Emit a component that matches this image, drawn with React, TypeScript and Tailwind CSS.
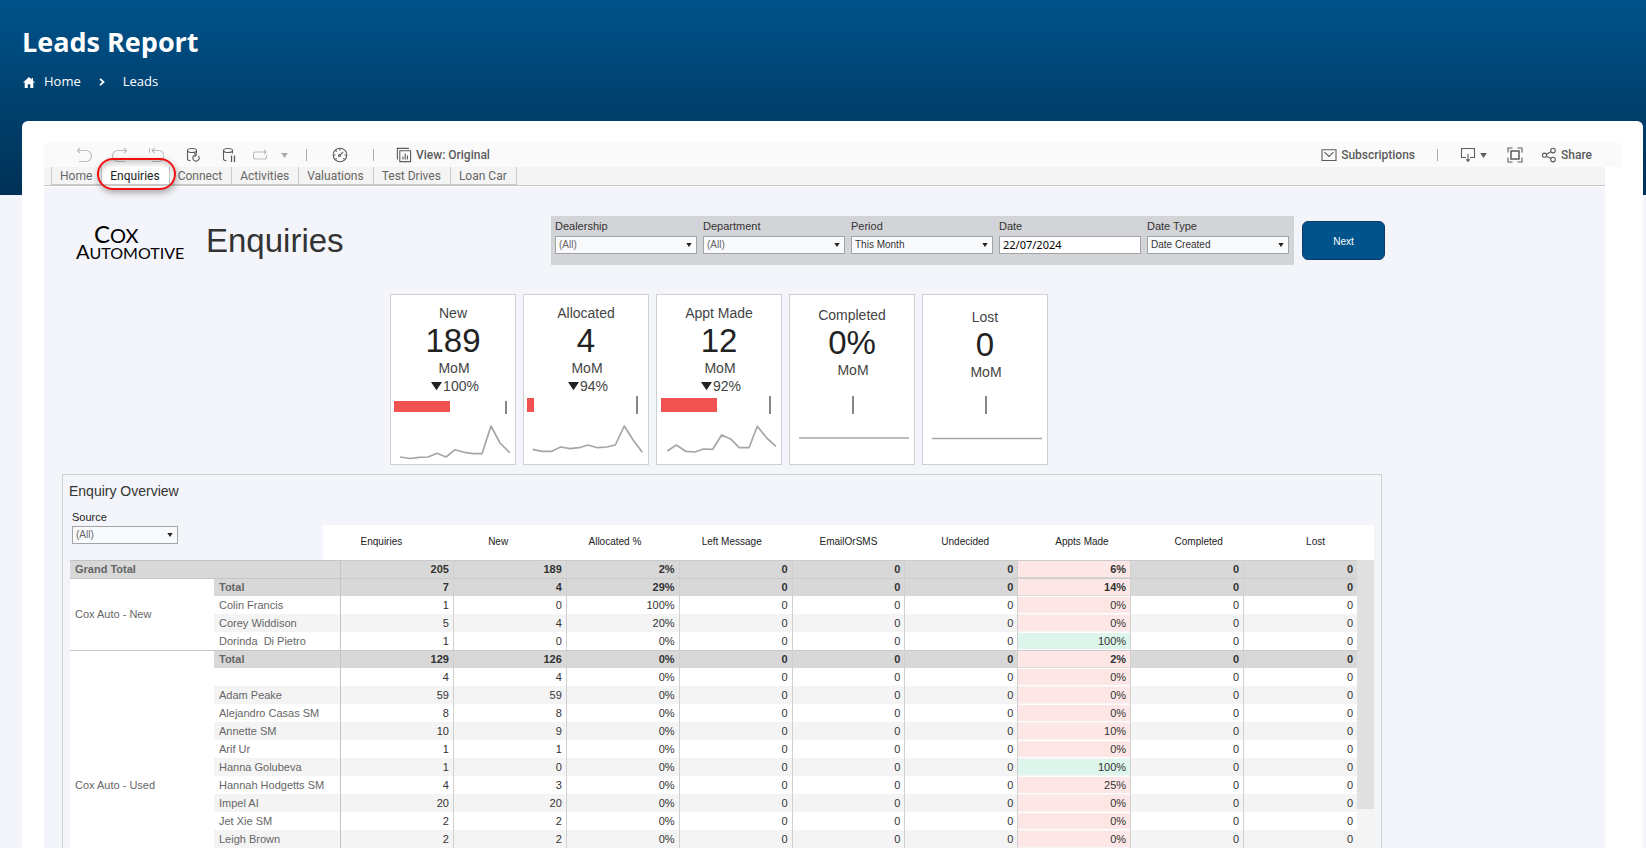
import React from 'react';
import clsx from 'clsx';

type Kpi = {
  label: string;
  value: string;
  change?: string;
  pad: string;
  bar?: { x: number; y: number; w: number; h: number };
  tick: { x: number; y: number; h: number };
  points: string;
};

type Row = { name: string; values: string[]; total?: boolean };

const FILTERS = [
  { id: 'dealership', label: 'Dealership', value: '(All)', muted: true },
  { id: 'department', label: 'Department', value: '(All)', muted: true },
  { id: 'period', label: 'Period', value: 'This Month' },
  { id: 'date', label: 'Date', value: '22/07/2024', text: true },
  { id: 'date-type', label: 'Date Type', value: 'Date Created' },
];

const TABS = ['Home', 'Enquiries', 'Connect', 'Activities', 'Valuations', 'Test Drives', 'Loan Car'];

const KPIS: Kpi[] = [
  {
    label: 'New', value: '189', change: '100%', pad: 'pt-[9px]',
    bar: { x: 3, y: 7, w: 56, h: 11 }, tick: { x: 114, y: 7, h: 13 },
    points: '9,63 19,64.5 28,63.3 37,63 46,59.3 55,63 64,55.7 73,58.3 82,59.7 91,59.7 100,32 109,49 118.7,58.7',
  },
  {
    label: 'Allocated', value: '4', change: '94%', pad: 'pt-[9px]',
    bar: { x: 3, y: 4, w: 7, h: 14 }, tick: { x: 112, y: 2, h: 18 },
    points: '8.7,55.3 18,57.3 27.7,57.3 36.7,53 46,54.7 55,53.7 64,51 73.3,53.7 82.7,53 91.3,51 100.3,32 109.3,46.3 118.3,58.3',
  },
  {
    label: 'Appt Made', value: '12', change: '92%', pad: 'pt-[9px]',
    bar: { x: 4, y: 4, w: 56, h: 14 }, tick: { x: 112, y: 2, h: 18 },
    points: '10.3,57 19.3,51 28.7,57.3 38,58 46.3,55 55.7,55.3 64.7,41 74,45.3 82.3,53.7 92,53.7 100.3,32.3 109.7,44 119,52.3',
  },
  { label: 'Completed', value: '0%', pad: 'pt-[11px]', tick: { x: 62, y: 2, h: 18 }, points: '9,44 119,44' },
  { label: 'Lost', value: '0', pad: 'pt-[13px]', tick: { x: 62, y: 2, h: 18 }, points: '9,44.5 119,44.5' },
];

const COLUMNS = ['Enquiries', 'New', 'Allocated %', 'Left Message', 'EmailOrSMS', 'Undecided', 'Appts Made', 'Completed', 'Lost'];

// enquiries, new, allocated %, appts made; every other measure is zero
const row = (name: string, enq: string, fresh: string, alloc: string, appts: string, total = false): Row => ({
  name,
  total,
  values: [enq, fresh, alloc, '0', '0', '0', appts, '0', '0'],
});

const GRAND_TOTAL = row('Grand Total', '205', '189', '2%', '6%', true);

const GROUPS = [
  {
    name: 'Cox Auto - New',
    rows: [
      row('Total', '7', '4', '29%', '14%', true),
      row('Colin Francis', '1', '0', '100%', '0%'),
      row('Corey Widdison', '5', '4', '20%', '0%'),
      row('Dorinda  Di Pietro', '1', '0', '0%', '100%'),
    ],
  },
  {
    name: 'Cox Auto - Used',
    more: true,
    rows: [
      row('Total', '129', '126', '0%', '2%', true),
      row('', '4', '4', '0%', '0%'),
      row('Adam Peake', '59', '59', '0%', '0%'),
      row('Alejandro Casas SM', '8', '8', '0%', '0%'),
      row('Annette SM', '10', '9', '0%', '10%'),
      row('Arif Ur', '1', '1', '0%', '0%'),
      row('Hanna Golubeva', '1', '0', '0%', '100%'),
      row('Hannah Hodgetts SM', '4', '3', '0%', '25%'),
      row('Impel AI', '20', '20', '0%', '0%'),
      row('Jet Xie SM', '2', '2', '0%', '0%'),
      row('Leigh Brown', '2', '2', '0%', '0%'),
    ],
  },
];

// --- ICONS ---
const Icon = ({ children }: { children: React.ReactNode }) => (
  <svg viewBox="0 0 16 16" className="size-4 shrink-0" fill="none" stroke="currentColor" strokeWidth="1.1" aria-hidden="true">
    {children}
  </svg>
);

const UndoIcon = () => (
  <Icon><path d="M1.5 3.5H10a5 5 0 0 1 0 11H3M4 1 1.5 3.5 4 6" /></Icon>
);

const RedoIcon = () => (
  <Icon><path d="M14.5 3.5H6a5 5 0 0 0 0 11h7M12 1l2.5 2.5L12 6" /></Icon>
);

const RevertIcon = () => (
  <Icon><path d="M1.5 1v5M4 3.5h6.5a5 5 0 0 1 0 11H4M6.5 1 4 3.5 6.5 6" /></Icon>
);

const DbPath = () => (
  <path d="M2.5 3.5c0-1.2 2-2 4.5-2s4.5.8 4.5 2-2 2-4.5 2-4.5-.8-4.5-2ZM2.5 3.5V12c0 .8.8 1.5 3 1.8M11.5 3.5v3" />
);

const RefreshIcon = () => (
  <Icon><g transform="translate(1)"><DbPath /><path d="M13.400 8.800a3.200 3.200 0 1 1-3.400-.9M9.400 6 11.400 7.900l-1.800 2.100" /></g></Icon>
);

const PauseIcon = () => (
  <Icon><g transform="translate(1)"><DbPath /><path d="M10.5 8.500v6.500M13.5 8.500v6.500" strokeWidth="1.3" /></g></Icon>
);

const ReplayIcon = () => (
  <Icon><path d="M10 12H3.500a2 2 0 0 1-2-2V7a2 2 0 0 1 2-2H14M12 3l2.200 2L12 7M10 12h2.500a2 2 0 0 0 2-2V8" /></Icon>
);

const GaugeIcon = () => (
  <Icon>
    <circle cx="8" cy="8" r="6.800" />
    <circle cx="7.500" cy="8.500" r="1" />
    <path d="m8.200 7.800 3-3M8 1.500v2M1.500 8h2M12.500 8h2M3.400 3.400l1.300 1.300M3.400 12.600l1.300-1.300M12.600 12.600l-1.300-1.300" />
  </Icon>
);

const ViewIcon = () => (
  <Icon>
    <path d="M3.800 3.800h10.800v10.800H3.800zM1.400 12.500V1.400h11.500M7 12.500V9.500M9.200 12.500V6.500M11.400 12.500V8.500" />
  </Icon>
);

const MailIcon = () => (
  <Icon><path d="M1 2.700h14v10.800H1zM3.500 5.200 8 9.500l4.500-4.300" /></Icon>
);

const DownloadIcon = () => (
  <Icon>
    <path d="M6 10.500H1.500v-9h13v9H10M8 7v7" />
    <path d="M5.500 12.200h5L8 15.200z" fill="currentColor" stroke="none" />
  </Icon>
);

const FullScreenIcon = () => (
  <Icon>
    <path d="M4 4h8v8H4z" strokeWidth="1.500" />
    <path d="M1 5.500V1h4.500M10.500 1H15v4.500M15 10.500V15h-4.500M5.500 15H1v-4.500" />
  </Icon>
);

const ShareIcon = () => (
  <Icon>
    <circle cx="3.500" cy="8.200" r="2.100" />
    <circle cx="12" cy="3.600" r="2.300" />
    <circle cx="12" cy="12.600" r="2.300" />
    <path d="m5.400 7.300 4.500-2.500M5.400 9.200l4.600 2.300" />
  </Icon>
);

const Caret = ({ className }: { className?: string }) => (
  <svg viewBox="0 0 8 6" className={clsx('shrink-0', className)} fill="currentColor" aria-hidden="true">
    <path d="M0 0h8L4 6z" />
  </svg>
);

const Divider = () => <span className="h-3 w-px bg-[#a9a9a9]" />;

// --- CONTROLS ---
const Dropdown = ({ id, value, muted }: { id: string; value: string; muted?: boolean }) => (
  <div className="relative">
    <select
      id={id}
      defaultValue={value}
      className={clsx(
        'block h-[18px] w-full appearance-none border border-[#a2a4a8] bg-[#f9fafc] pl-[3px] text-[10px] leading-4',
        muted ? 'text-[#666666]' : 'text-[#333333]'
      )}
    >
      <option>{value}</option>
    </select>
    <Caret className="pointer-events-none absolute right-[5px] top-[7px] h-1 w-1.5 text-[#222222]" />
  </div>
);

const Toolbar = () => (
  <div className="flex h-6 items-center bg-[#fafafa] pl-[22px] pr-[30px] font-[Roboto,sans-serif] text-xs font-medium text-[#5c5c5c]">
    <button aria-label="Undo" className="flex w-9 justify-center text-[#bdbdbd]"><UndoIcon /></button>
    <button aria-label="Redo" className="flex w-9 justify-center text-[#bdbdbd]"><RedoIcon /></button>
    <button aria-label="Revert" className="flex w-9 justify-center text-[#bdbdbd]"><RevertIcon /></button>
    <button aria-label="Refresh data" className="flex w-9 justify-center"><RefreshIcon /></button>
    <button aria-label="Pause updates" className="flex w-9 justify-center"><PauseIcon /></button>
    <button aria-label="Replay" className="flex w-7 justify-center text-[#bdbdbd]"><ReplayIcon /></button>
    <button aria-label="Replay speed" className="mr-3 flex w-5 justify-center text-[#aaaaaa]"><Caret className="h-[5px] w-[7px]" /></button>
    <Divider />
    <button aria-label="Metrics" className="flex w-[66px] justify-center"><GaugeIcon /></button>
    <Divider />
    <button className="ml-[22px] flex items-center gap-1"><ViewIcon />View: Original</button>

    <button className="ml-auto flex items-center gap-1"><MailIcon />Subscriptions</button>
    <span className="mx-[22px] flex"><Divider /></span>
    <button aria-label="Download" className="flex items-center gap-1"><DownloadIcon /><Caret className="h-[5px] w-[7px]" /></button>
    <button aria-label="Full screen" className="ml-5"><FullScreenIcon /></button>
    <button className="ml-[18px] flex items-center gap-1"><ShareIcon />Share</button>
  </div>
);

const Tabs = () => (
  <nav className="mr-[17px] flex h-[19px] border-b border-[#c6c6c6] bg-[#f4f4f4] pl-[7px] font-[Roboto,sans-serif] text-xs leading-4 text-[#666666]">
    {TABS.map((tab, i) => (
      <a
        key={tab}
        href="#"
        className={clsx(
          'relative border-b border-r border-[#c9c9c9] px-2 pt-px',
          i === 0 ? 'border-l pr-[9px]' : 'pr-[9px]',
          tab === 'Enquiries' && 'bg-white text-[#222222]'
        )}
      >
        {tab}
        {tab === 'Enquiries' && (
          <span className="absolute -bottom-[6px] -left-[5px] -right-[7px] -top-[9px] z-10 rounded-[16px] border-2 border-[#f01010] shadow-[1px_3px_6px_rgba(0,0,0,0.3),inset_1px_3px_5px_rgba(0,0,0,0.2)]" />
        )}
      </a>
    ))}
  </nav>
);

const KpiCard = ({ kpi }: { kpi: Kpi }) => (
  <div className={clsx('flex h-[171px] w-[126px] flex-col items-center border border-[#cfd0d4] bg-white text-sm leading-[18px] text-[#444444]', kpi.pad)}>
    <div>{kpi.label}</div>
    <div className="text-[33px] leading-[37px] text-[#222222]">{kpi.value}</div>
    <div className="pl-0.5">MoM</div>
    {kpi.change && (
      <div className="flex items-center gap-px pl-1">
        <Caret className="h-[10px] w-[11px] text-[#222222]" />
        {kpi.change}
      </div>
    )}
    <svg viewBox="0 1 124 69" className="mt-auto h-[69px] w-[124px] shrink-0" aria-hidden="true">
      {kpi.bar && <rect x={kpi.bar.x} y={kpi.bar.y} width={kpi.bar.w} height={kpi.bar.h} fill="#f05252" />}
      <rect x={kpi.tick.x} y={kpi.tick.y} width="2" height={kpi.tick.h} fill="#85868c" />
      <polyline points={kpi.points} fill="none" stroke="#a5a5ab" strokeWidth="1.7" strokeLinejoin="round" />
    </svg>
  </div>
);

const ValueCells = ({ values, first }: { values: string[]; first?: boolean }) => (
  <>
    {values.map((v, i) => {
      const isAppts = COLUMNS[i] === 'Appts Made';
      return (
        <td
          key={i}
          className={clsx(
            'p-0 text-right text-[#333333]',
            i < 8 && 'border-r border-r-[#d0d0d0]',
            first && 'border-t border-t-[#cbcbcb] pb-px'
          )}
        >
          <span className={clsx('block pr-1 leading-4', isAppts && (v === '100%' ? 'bg-[#ddf5ea]' : 'bg-[#fce7e6]'))}>{v}</span>
        </td>
      );
    })}
  </>
);

const EnquiryTable = () => (
  <div className="flex">
    <div className="min-w-0 flex-1">
      <table className="w-full table-fixed border-separate border-spacing-0 bg-white text-[11px] text-[#666666]">
        <colgroup>
          <col className="w-[144px]" />
          <col className="w-[127px]" />
          {COLUMNS.map((c) => <col key={c} />)}
        </colgroup>
        <tbody>
          <tr className="h-[18px] bg-[#d8d8d8] font-bold">
            <th colSpan={2} scope="row" className="border-r border-t border-[#c4c4c4] p-0 pb-px pl-[5px] text-left leading-4">
              {GRAND_TOTAL.name}
            </th>
            <ValueCells values={GRAND_TOTAL.values} first />
          </tr>
          {GROUPS.map((group) => (
            <React.Fragment key={group.name}>
              {group.rows.map((r, i) => (
                <tr
                  key={i}
                  className={clsx(
                    'h-[18px]',
                    r.total && 'bg-[#d8d8d8] font-bold',
                    !r.total && (i % 2 ? 'bg-white' : 'bg-[#f4f4f4]')
                  )}
                >
                  {i === 0 && (
                    <th
                      rowSpan={group.rows.length + (group.more ? 1 : 0)}
                      scope="rowgroup"
                      className="border-t border-[#c4c4c4] bg-white p-0 pl-[5px] text-left font-normal"
                    >
                      {group.name}
                    </th>
                  )}
                  <th
                    scope="row"
                    className={clsx(
                      'whitespace-pre border-r border-r-[#c4c4c4] p-0 pl-[5px] text-left leading-4',
                      i === 0 ? 'border-t border-t-[#c4c4c4] pb-px' : 'font-normal'
                    )}
                  >
                    {r.name}
                  </th>
                  <ValueCells values={r.values} first={i === 0} />
                </tr>
              ))}
              {group.more && <tr className="h-[72px]"><td colSpan={10} /></tr>}
            </React.Fragment>
          ))}
        </tbody>
      </table>
    </div>
    <div className="w-[17px] shrink-0 bg-[#f4f4f4]">
      <div className="h-[249px] bg-[#e0e0e0]" />
    </div>
  </div>
);

export default function App() {
  return (
    <div className="h-screen overflow-hidden bg-[#f4f5fa] font-['Liberation_Sans',Arial,sans-serif]">
      <header className="h-[195px] bg-linear-to-b from-[#00538b] to-[#003156] px-[22px] pt-6 font-['Open_Sans',sans-serif] text-white">
        <h1 className="text-[27px] font-bold leading-9">Leads Report</h1>
        <nav aria-label="Breadcrumb" className="mt-[11px] flex items-center text-[13px] leading-5">
          <svg viewBox="0 0 12 11" className="ml-px mr-[9px] mt-0.5 h-[11px] w-3" fill="currentColor" aria-hidden="true">
            <path d="M6 0 0 5.500h1.700V11h3V7.300h2.600V11h3V5.500H12L10 3.700V1H8.600v1.400z" />
          </svg>
          <a href="#">Home</a>
          <svg viewBox="0 0 6 8" className="mx-[18px] mt-0.5 h-2 w-1.5" fill="none" stroke="currentColor" strokeWidth="1.800" aria-hidden="true">
            <path d="m1 .8 3.500 3.200L1 7.200" />
          </svg>
          <a href="#">Leads</a>
        </nav>
      </header>

      <main className="relative -mt-[74px] ml-[22px] mr-[3px] rounded-t-md bg-white pl-[22px] pr-[21px] pt-[22px]">
        <Toolbar />
        <Tabs />

        <div className="mr-[17px] mt-px bg-[#f4f5fa] pl-[18px] pr-[223px]">
          <section className="flex items-start pl-3.5 pt-[29px]">
            <div className="w-[112px] whitespace-nowrap pt-2.5 font-[Lato,sans-serif] text-black">
              <div className="h-[17px] pl-[18px] text-xl leading-4"><span className="text-2xl leading-4">C</span>OX</div>
              <div className="h-4 text-base leading-4"><span className="text-xl leading-4">A</span>UTOMOTIVE</div>
            </div>
            <h2 className="ml-[18px] pt-[7px] text-[33px] leading-9 text-[#333333]">Enquiries</h2>

            <form className="ml-auto grid h-[49px] w-[743px] grid-cols-5 gap-1.5 bg-[#d3d4d8] pl-1 pr-[5px] pt-[3px]">
              {FILTERS.map((f) => (
                <div key={f.id}>
                  <label htmlFor={f.id} className="block h-[17px] text-[11px] leading-[15px] text-[#333333]">{f.label}</label>
                  {f.text ? (
                    <input
                      id={f.id}
                      defaultValue={f.value}
                      className="block h-[18px] w-full border border-[#a2a4a8] bg-white pb-0.5 pl-[3px] font-['Noto_Sans',sans-serif] text-[11px] text-black"
                    />
                  ) : (
                    <Dropdown id={f.id} value={f.value} muted={f.muted} />
                  )}
                </div>
              ))}
            </form>
            <button className="-mr-[3px] ml-2 mt-[5px] h-[39px] w-[83px] rounded-md border border-[#12386b] bg-[#00538b] pt-px text-[10px] text-white">
              Next
            </button>
          </section>

          <section className="ml-[328px] mt-[29px] flex gap-[7px]">
            {KPIS.map((kpi) => <KpiCard key={kpi.label} kpi={kpi} />)}
          </section>

          <section className="mt-[9px] border border-b-0 border-[#cfd0d4] px-[7px] pt-[7px]">
            <h3 className="-ml-px text-sm leading-[18px] text-[#333333]">Enquiry Overview</h3>
            <div className="flex items-start">
              <div className="w-[108px] shrink-0 pl-0.5 pt-2.5">
                <label htmlFor="source" className="block h-4 text-[11px] leading-[15px] text-[#222222]">Source</label>
                <Dropdown id="source" value="(All)" muted />
              </div>
              <div className="ml-[145px] mt-[25px] min-w-0 flex-1">
                <table className="w-full table-fixed bg-white text-[10px] text-[#222222]">
                  <thead>
                    <tr className="h-[35px]">
                      {COLUMNS.map((c) => <th key={c} scope="col" className="p-0 pb-0.5 font-normal">{c}</th>)}
                    </tr>
                  </thead>
                </table>
              </div>
            </div>
            <EnquiryTable />
          </section>
        </div>
      </main>
    </div>
  );
}
